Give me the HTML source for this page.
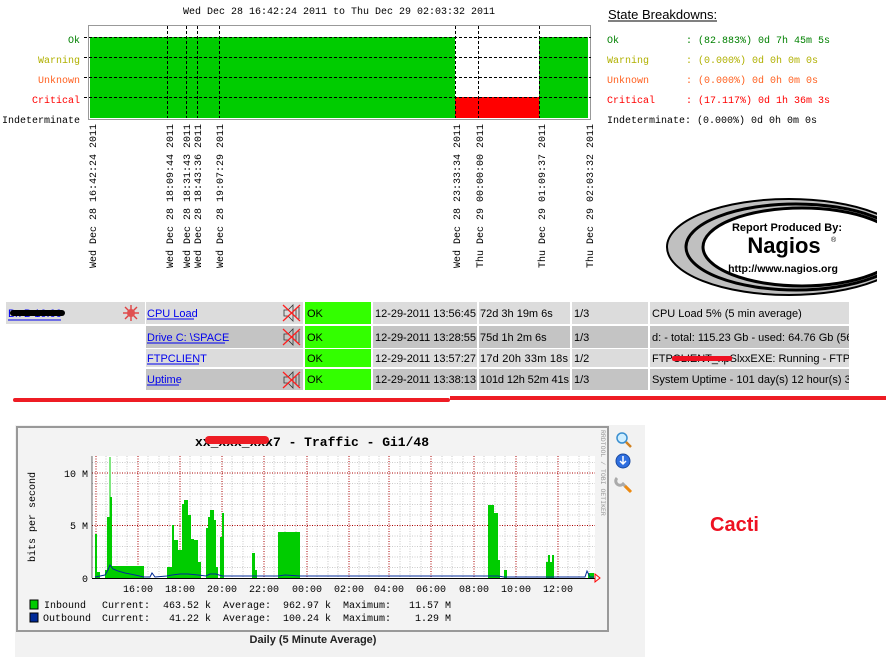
<!DOCTYPE html>
<html><head><meta charset="utf-8"><style>
html,body{margin:0;padding:0;background:#fff;width:886px;height:662px;overflow:hidden}
svg{display:block}
.m{font-family:"Liberation Mono",monospace;font-size:10px}
.s{font-family:"Liberation Sans",sans-serif;font-size:11px}
</style></head><body>
<svg width="886" height="662" viewBox="0 0 886 662" xmlns="http://www.w3.org/2000/svg">
<text class="m" x="339" y="14" text-anchor="middle" fill="#000">Wed Dec 28 16:42:24 2011 to Thu Dec 29 02:03:32 2011</text>
<rect x="88.5" y="25.5" width="502" height="94" fill="#fff" stroke="#999" stroke-width="1"/>
<rect x="90" y="37" width="365" height="81" fill="#00cc00"/>
<rect x="539" y="37" width="49" height="81" fill="#00cc00"/>
<rect x="455" y="97" width="84" height="21" fill="#ff0000"/>
<g stroke="#000" stroke-width="1" stroke-dasharray="3,2">
<line x1="84" y1="37.5" x2="591" y2="37.5"/>
<line x1="84" y1="57.5" x2="591" y2="57.5"/>
<line x1="84" y1="77.5" x2="591" y2="77.5"/>
<line x1="84" y1="97.5" x2="591" y2="97.5"/>
<line x1="167.5" y1="26" x2="167.5" y2="118"/>
<line x1="186.5" y1="26" x2="186.5" y2="118"/>
<line x1="197.5" y1="26" x2="197.5" y2="118"/>
<line x1="219.5" y1="26" x2="219.5" y2="118"/>
<line x1="455.5" y1="26" x2="455.5" y2="118"/>
<line x1="478.5" y1="26" x2="478.5" y2="118"/>
<line x1="539.5" y1="26" x2="539.5" y2="118"/>
</g>
<g class="m" text-anchor="end">
<text x="80" y="43" fill="#008000">Ok</text>
<text x="80" y="63" fill="#b0b000">Warning</text>
<text x="80" y="83" fill="#ff6020">Unknown</text>
<text x="80" y="103" fill="#ff0000">Critical</text>
<text x="80" y="123" fill="#000">Indeterminate</text>
</g>
<g class="m" fill="#000">
<text transform="translate(96,268) rotate(-90)">Wed Dec 28 16:42:24 2011</text>
<text transform="translate(173,268) rotate(-90)">Wed Dec 28 18:09:44 2011</text>
<text transform="translate(190,268) rotate(-90)">Wed Dec 28 18:31:43 2011</text>
<text transform="translate(201,268) rotate(-90)">Wed Dec 28 18:43:36 2011</text>
<text transform="translate(223,268) rotate(-90)">Wed Dec 28 19:07:29 2011</text>
<text transform="translate(460,268) rotate(-90)">Wed Dec 28 23:33:34 2011</text>
<text transform="translate(483,268) rotate(-90)">Thu Dec 29 00:00:00 2011</text>
<text transform="translate(545,268) rotate(-90)">Thu Dec 29 01:09:37 2011</text>
<text transform="translate(593,268) rotate(-90)">Thu Dec 29 02:03:32 2011</text>
</g>
<text x="608" y="19" font-family="Liberation Sans,sans-serif" font-size="13" fill="#000">State Breakdowns:</text>
<line x1="608" y1="21" x2="717" y2="21" stroke="#000"/>
<g class="m">
<text x="607" y="43" fill="#008000">Ok</text><text x="686" y="43" fill="#008000">: (82.883%) 0d 7h 45m 5s</text>
<text x="607" y="63" fill="#b0b000">Warning</text><text x="686" y="63" fill="#b0b000">: (0.000%) 0d 0h 0m 0s</text>
<text x="607" y="83" fill="#ff6020">Unknown</text><text x="686" y="83" fill="#ff6020">: (0.000%) 0d 0h 0m 0s</text>
<text x="607" y="103" fill="#ff0000">Critical</text><text x="686" y="103" fill="#ff0000">: (17.117%) 0d 1h 36m 3s</text>
<text x="607" y="123" fill="#000">Indeterminate: (0.000%) 0d 0h 0m 0s</text>
</g>
<svg x="660" y="190" width="217" height="110" overflow="hidden">
<ellipse cx="129" cy="57" rx="122" ry="48" fill="#c0c0c0" stroke="#000" stroke-width="2"/>
<ellipse cx="136" cy="57" rx="110" ry="43" fill="#c0c0c0" stroke="#000" stroke-width="3"/>
<ellipse cx="142" cy="57" rx="99" ry="39" fill="#fff" stroke="#000" stroke-width="3"/>
<text x="127" y="41" text-anchor="middle" font-family="Liberation Sans,sans-serif" font-weight="bold" font-size="11" fill="#000">Report Produced By:</text>
<text x="124" y="63" text-anchor="middle" font-family="Liberation Sans,sans-serif" font-weight="bold" font-size="22" fill="#000">Nagios</text>
<text x="171" y="52" font-family="Liberation Sans,sans-serif" font-size="7" fill="#000">®</text>
<text x="123" y="82" text-anchor="middle" font-family="Liberation Sans,sans-serif" font-weight="bold" font-size="10.5" fill="#000">http://www.nagios.org</text>
</svg>
<g class="s">
<rect x="6" y="302" width="139" height="22" fill="#dcdcdc"/>
<text x="8" y="317" fill="#0000ee">Bx B 10.00</text>
<line x1="8" y1="320" x2="61" y2="320" stroke="#0000ee"/>
<rect x="10" y="310" width="55" height="6" rx="3" fill="#000"/>
<g transform="translate(131,313)" stroke="#e04040" stroke-width="1.4">
<line x1="-8" y1="0" x2="8" y2="0"/><line x1="0" y1="-8" x2="0" y2="8"/>
<line x1="-6" y1="-6" x2="6" y2="6"/><line x1="-6" y1="6" x2="6" y2="-6"/>
<circle r="4" fill="#e05050" stroke="none"/>
</g>
<rect x="146" y="302" width="157" height="22" fill="#dcdcdc"/>
<rect x="146" y="326" width="157" height="22" fill="#c4c4c4"/>
<rect x="146" y="349" width="157" height="18" fill="#dcdcdc"/>
<rect x="146" y="369" width="157" height="21" fill="#c4c4c4"/>
<rect x="305" y="302" width="66" height="22" fill="#33ff00"/>
<rect x="305" y="326" width="66" height="22" fill="#33ff00"/>
<rect x="305" y="349" width="66" height="18" fill="#33ff00"/>
<rect x="305" y="369" width="66" height="21" fill="#33ff00"/>
<g fill="#dcdcdc"><rect x="373" y="302" width="104" height="22"/><rect x="479" y="302" width="91" height="22"/><rect x="572" y="302" width="76" height="22"/><rect x="650" y="302" width="199" height="22"/>
<rect x="373" y="349" width="104" height="18"/><rect x="479" y="349" width="91" height="18"/><rect x="572" y="349" width="76" height="18"/><rect x="650" y="349" width="199" height="18"/></g>
<g fill="#c4c4c4"><rect x="373" y="326" width="104" height="22"/><rect x="479" y="326" width="91" height="22"/><rect x="572" y="326" width="76" height="22"/><rect x="650" y="326" width="199" height="22"/>
<rect x="373" y="369" width="104" height="21"/><rect x="479" y="369" width="91" height="21"/><rect x="572" y="369" width="76" height="21"/><rect x="650" y="369" width="199" height="21"/></g>
<g fill="#0000ee">
<text x="147" y="317">CPU Load</text><line x1="147" y1="319" x2="194" y2="319" stroke="#0000ee"/>
<text x="147" y="341">Drive C: \SPACE</text><line x1="147" y1="343" x2="225" y2="343" stroke="#0000ee"/>
<text x="147" y="362">FTPCLIENT</text><line x1="147" y1="364" x2="199" y2="364" stroke="#0000ee"/>
<text x="147" y="383">Uptime</text><line x1="147" y1="385" x2="179" y2="385" stroke="#0000ee"/>
</g>
<g id="mute" fill="none" stroke="#333" stroke-width="0.8">
<path d="M284 310h4l5-5v16l-5-5h-4z"/><path d="M296 309v8M299 307v12"/>
<path d="M283 305l17 16M300 305l-17 16" stroke="#ff2020" stroke-width="1.3"/>
</g>
<use href="#mute" y="24"/><use href="#mute" y="67"/>
<g fill="#000">
<text x="307" y="317">OK</text><text x="307" y="341">OK</text><text x="307" y="362">OK</text><text x="307" y="383">OK</text>
<text x="375" y="317" textLength="101">12-29-2011 13:56:45</text><text x="375" y="341" textLength="101">12-29-2011 13:28:55</text><text x="375" y="362" textLength="101">12-29-2011 13:57:27</text><text x="375" y="383" textLength="101">12-29-2011 13:38:13</text>
<text x="480" y="317">72d 3h 19m 6s</text><text x="480" y="341">75d 1h 2m 6s</text><text x="480" y="362" textLength="88">17d 20h 33m 18s</text><text x="480" y="383" textLength="89">101d 12h 52m 41s</text>
<text x="574" y="317">1/3</text><text x="574" y="341">1/3</text><text x="574" y="362">1/2</text><text x="574" y="383">1/3</text>
</g>
<svg x="650" y="302" width="199" height="88" overflow="hidden">
<g fill="#000">
<text x="2" y="15">CPU Load 5% (5 min average)</text>
<text x="2" y="39">d: - total: 115.23 Gb - used: 64.76 Gb (56%)</text>
<text x="2" y="60">FTPCLIENT_xpSlxxEXE: Running - FTPCLIENT</text>
<text x="2" y="81">System Uptime - 101 day(s) 12 hour(s) 35 min</text>
</g>
<rect x="22" y="54" width="60" height="5" rx="2" fill="#ee1122"/>
</svg>
</g>
<rect x="13" y="398" width="437" height="4" rx="2" fill="#ee1c24"/>
<rect x="450" y="396" width="436" height="4" fill="#ee1c24"/>
<rect x="15" y="425" width="630" height="232" fill="#f2f2f2"/>
<rect x="17" y="427" width="591" height="204" fill="#f3f3f3" stroke="#999" stroke-width="2"/>
<text x="312" y="446" text-anchor="middle" font-family="Liberation Mono,monospace" font-weight="bold" font-size="13" fill="#000">xx_xxx_xxx7 - Traffic - Gi1/48</text>
<rect x="205" y="436" width="64" height="8" rx="4" fill="#ee1c24"/>
<rect x="92" y="456" width="503" height="122" fill="#fff"/>
<g stroke="#bbb" stroke-width="0.8" stroke-dasharray="1,1.5">
<line x1="92" y1="462.5" x2="595" y2="462.5"/><line x1="92" y1="483.5" x2="595" y2="483.5"/><line x1="92" y1="494" x2="595" y2="494"/><line x1="92" y1="504.5" x2="595" y2="504.5"/><line x1="92" y1="515" x2="595" y2="515"/><line x1="92" y1="536" x2="595" y2="536"/><line x1="92" y1="546.5" x2="595" y2="546.5"/><line x1="92" y1="557" x2="595" y2="557"/><line x1="92" y1="567.5" x2="595" y2="567.5"/>
<line x1="106" y1="456" x2="106" y2="578"/><line x1="117" y1="456" x2="117" y2="578"/><line x1="127" y1="456" x2="127" y2="578"/><line x1="148" y1="456" x2="148" y2="578"/><line x1="159" y1="456" x2="159" y2="578"/><line x1="169" y1="456" x2="169" y2="578"/><line x1="190" y1="456" x2="190" y2="578"/><line x1="201" y1="456" x2="201" y2="578"/><line x1="211" y1="456" x2="211" y2="578"/><line x1="232" y1="456" x2="232" y2="578"/><line x1="243" y1="456" x2="243" y2="578"/><line x1="253" y1="456" x2="253" y2="578"/><line x1="274" y1="456" x2="274" y2="578"/><line x1="285" y1="456" x2="285" y2="578"/><line x1="296" y1="456" x2="296" y2="578"/><line x1="317" y1="456" x2="317" y2="578"/><line x1="328" y1="456" x2="328" y2="578"/><line x1="338" y1="456" x2="338" y2="578"/><line x1="359" y1="456" x2="359" y2="578"/><line x1="369" y1="456" x2="369" y2="578"/><line x1="379" y1="456" x2="379" y2="578"/><line x1="400" y1="456" x2="400" y2="578"/><line x1="410" y1="456" x2="410" y2="578"/><line x1="421" y1="456" x2="421" y2="578"/><line x1="442" y1="456" x2="442" y2="578"/><line x1="452" y1="456" x2="452" y2="578"/><line x1="463" y1="456" x2="463" y2="578"/><line x1="484" y1="456" x2="484" y2="578"/><line x1="495" y1="456" x2="495" y2="578"/><line x1="505" y1="456" x2="505" y2="578"/><line x1="526" y1="456" x2="526" y2="578"/><line x1="537" y1="456" x2="537" y2="578"/><line x1="547" y1="456" x2="547" y2="578"/><line x1="568" y1="456" x2="568" y2="578"/><line x1="579" y1="456" x2="579" y2="578"/><line x1="589" y1="456" x2="589" y2="578"/>
</g>
<g stroke="#a00" stroke-width="1" stroke-dasharray="1,1.5">
<line x1="92" y1="473" x2="595" y2="473"/><line x1="92" y1="525.5" x2="595" y2="525.5"/>
<line x1="96" y1="456" x2="96" y2="578"/><line x1="138" y1="456" x2="138" y2="578"/><line x1="180" y1="456" x2="180" y2="578"/><line x1="222" y1="456" x2="222" y2="578"/><line x1="264" y1="456" x2="264" y2="578"/><line x1="307" y1="456" x2="307" y2="578"/><line x1="349" y1="456" x2="349" y2="578"/><line x1="389" y1="456" x2="389" y2="578"/><line x1="431" y1="456" x2="431" y2="578"/><line x1="474" y1="456" x2="474" y2="578"/><line x1="516" y1="456" x2="516" y2="578"/><line x1="558" y1="456" x2="558" y2="578"/>
</g>
<g fill="#00cc00">
<rect x="95" y="534" width="2" height="44"/><rect x="97" y="572" width="3" height="6"/>
<rect x="105" y="570" width="3" height="8"/><rect x="107" y="517" width="3" height="61"/><rect x="109.5" y="457" width="1" height="121"/><rect x="110" y="497" width="2" height="81"/>
<rect x="112" y="566" width="32" height="12"/>
<rect x="167" y="567" width="5" height="11"/><rect x="172" y="525" width="2" height="53"/><rect x="174" y="540" width="4" height="38"/><rect x="178" y="550" width="4" height="28"/><rect x="182" y="504" width="2" height="74"/><rect x="184" y="500" width="4" height="78"/><rect x="188" y="515" width="3" height="63"/><rect x="191" y="539" width="3" height="39"/><rect x="194" y="540" width="4" height="38"/><rect x="198" y="562" width="3" height="16"/>
<rect x="206" y="528" width="2" height="50"/><rect x="208" y="517" width="2" height="61"/><rect x="210" y="510" width="4" height="68"/><rect x="214" y="520" width="2" height="58"/><rect x="216" y="567" width="2" height="11"/>
<rect x="220" y="537" width="2" height="41"/><rect x="222" y="513" width="2" height="65"/>
<rect x="252" y="553" width="3" height="25"/><rect x="255" y="570" width="2" height="8"/>
<rect x="278" y="532" width="22" height="46"/>
<rect x="488" y="505" width="6" height="73"/><rect x="494" y="513" width="4" height="65"/><rect x="498" y="560" width="2" height="18"/><rect x="504" y="570" width="3" height="8"/>
<rect x="546" y="562" width="8" height="16"/><rect x="548" y="555" width="2" height="23"/><rect x="552" y="555" width="2" height="23"/>
<rect x="588" y="573" width="6" height="5"/>
</g>
<polyline fill="none" stroke="#002a97" stroke-width="1" points="95,577 105,575 108,570 110,565 113,569 118,571 125,573 135,575 144,577 150,577 152,573 155,577 167,576 172,575 180,574 188,574 198,575 206,576 210,574 216,574 222,576 278,576 285,575 300,576 488,576 498,576 504,577 585,577 587,571 590,577 594,577"/>
<line x1="92" y1="578.5" x2="595" y2="578.5" stroke="#000"/>
<line x1="92" y1="456" x2="92" y2="578" stroke="#000" stroke-width="0.6"/>
<path d="M595 574l5 4-5 4z" fill="none" stroke="#f00"/>
<g font-family="Liberation Mono,monospace" font-size="10" fill="#000">
<text x="88" y="477" text-anchor="end">10 M</text>
<text x="88" y="529" text-anchor="end">5 M</text>
<text x="88" y="582" text-anchor="end">0</text>
<text transform="translate(35,562) rotate(-90)">bits per second</text>
<g text-anchor="middle"><text x="138" y="592">16:00</text><text x="180" y="592">18:00</text><text x="222" y="592">20:00</text><text x="264" y="592">22:00</text><text x="307" y="592">00:00</text><text x="349" y="592">02:00</text><text x="389" y="592">04:00</text><text x="431" y="592">06:00</text><text x="474" y="592">08:00</text><text x="516" y="592">10:00</text><text x="558" y="592">12:00</text></g>
<text x="44" y="608">Inbound</text><text x="102" y="608">Current:</text><text x="211" y="608" text-anchor="end">463.52 k</text><text x="223" y="608">Average:</text><text x="331" y="608" text-anchor="end">962.97 k</text><text x="343" y="608">Maximum:</text><text x="451" y="608" text-anchor="end">11.57 M</text>
<text x="43" y="621">Outbound</text><text x="102" y="621">Current:</text><text x="211" y="621" text-anchor="end">41.22 k</text><text x="223" y="621">Average:</text><text x="331" y="621" text-anchor="end">100.24 k</text><text x="343" y="621">Maximum:</text><text x="451" y="621" text-anchor="end">1.29 M</text>
</g>
<rect x="30" y="600" width="8" height="9" fill="#00cc00" stroke="#000"/>
<rect x="30" y="613" width="8" height="9" fill="#002a97" stroke="#000"/>
<text transform="translate(601,430) rotate(90)" font-family="Liberation Mono,monospace" font-size="6.5" fill="#999">RRDTOOL / TOBI OETIKER</text>
<text x="313" y="643" text-anchor="middle" font-family="Liberation Sans,sans-serif" font-weight="bold" font-size="11" fill="#222">Daily (5 Minute Average)</text>
<circle cx="622" cy="438" r="5" fill="#cfeeff" stroke="#3a8fd0" stroke-width="1.5"/><line x1="626" y1="442" x2="631" y2="447" stroke="#d08020" stroke-width="2.5"/>
<circle cx="623" cy="461" r="7" fill="#2f6fe0" stroke="#1a4aa0"/><path d="M623 456v8M620 461l3 3 3-3" stroke="#fff" stroke-width="1.5" fill="none"/>
<path d="M617 478a4 4 0 0 0 6 6l7 7" stroke="#aaa" stroke-width="3" fill="none"/><line x1="625" y1="486" x2="631" y2="492" stroke="#ee8a10" stroke-width="3"/>
<text x="710" y="531" font-family="Liberation Sans,sans-serif" font-weight="bold" font-size="20" fill="#ee1122">Cacti</text>
</svg>
</body></html>
